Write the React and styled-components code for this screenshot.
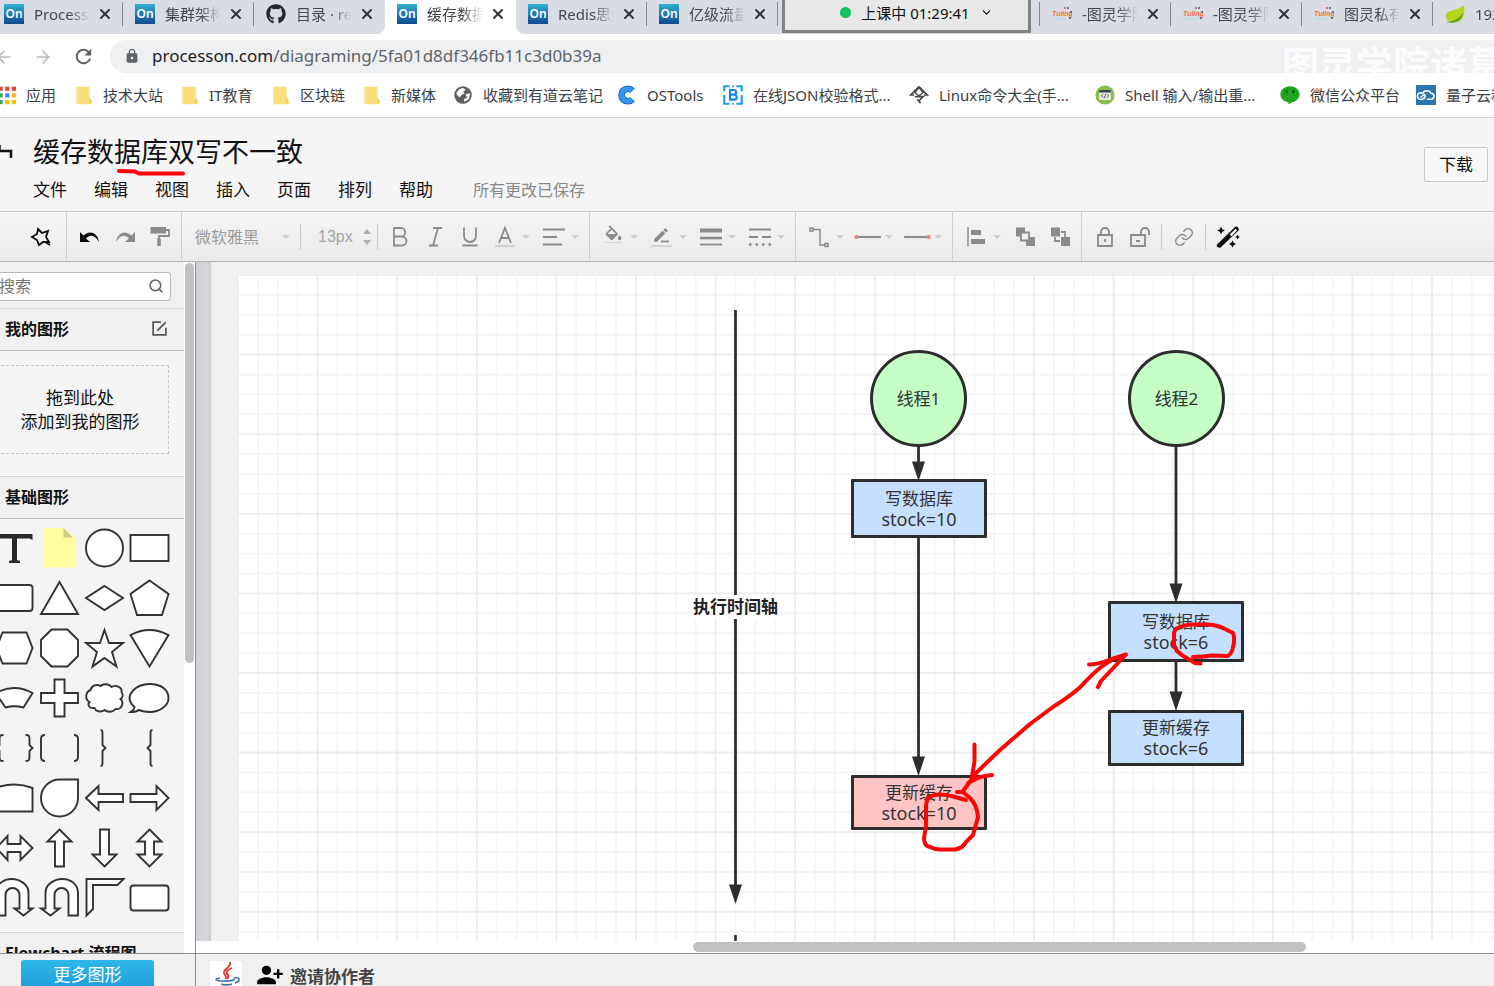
import React from "react";
import styled, { createGlobalStyle } from "styled-components";
import { FaGithub } from "react-icons/fa";
import { MdPersonAddAlt1, MdEdit, MdFormatColorFill, MdLock, MdRefresh } from "react-icons/md";
import { ArrowLeft, ArrowRight, ChevronDown, Link, Search, SquarePen, X } from "lucide-react";

const Global = createGlobalStyle`
  * { box-sizing: border-box; }
  body {
    margin: 0;
    overflow: hidden;
    background: #f0f0f0;
    color: #111;
    font-family: "Noto Sans", "Noto Sans CJK SC", sans-serif;
    font-size: 15px;
  }
  button, input, select { font: inherit; color: inherit; margin: 0; padding: 0; }
  button { background: none; border: 0; }
  a { color: inherit; text-decoration: none; }
  svg { display: block; flex: none; }
`;

const Page = styled.div`
  display: flex;
  flex-direction: column;
  height: 100vh;
  overflow: hidden;
`;

/* ---------- browser chrome ---------- */

const TabStrip = styled.div`
  position: relative;
  display: flex;
  flex: none;
  height: 34px;
  padding-right: 8px;
  background: #d9dce3;
`;

const TabList = styled.div`
  display: flex;
  margin-left: -8px;
`;

const Tab = styled.div`
  display: flex;
  flex: none;
  align-items: center;
  width: 131px;
  height: 34px;
  padding: 0 11px 6px 12px;
  background: ${(p) => (p.$active ? "#fff" : "#d9dce3")};
  border-radius: ${(p) => (p.$before ? "0 0 8px 0" : p.$after ? "0 0 0 8px" : "0")};
  box-shadow: ${(p) => (p.$before ? "8px 8px 0 #fff" : p.$after ? "-8px 8px 0 #fff" : "none")};
  position: relative;
  z-index: ${(p) => (p.$active ? 1 : 0)};
`;

const TabRule = styled.span`
  flex: none;
  width: 1px;
  height: 24px;
  margin: 0 12px 0 -13px;
  background: ${(p) => (p.$on ? "#85878d" : "transparent")};
`;

const TabTitle = styled.a`
  flex: none;
  width: 56px;
  margin: 0 7px 0 10px;
  overflow: hidden;
  white-space: nowrap;
  line-height: 24px;
  color: #45484d;
  mask-image: linear-gradient(90deg, #000 62%, transparent 100%);
`;

const CloseButton = styled.button`
  color: #33363b;
`;

const OnBadge = styled.span`
  flex: none;
  width: 20px;
  height: 20px;
  background: linear-gradient(#2fb0cf, #1c6fae 60%, #124a8f);
  color: #fff;
  font-size: 12px;
  font-weight: 600;
  line-height: 19px;
  text-align: center;
`;

const ClassStatus = styled.button`
  position: absolute;
  top: 0;
  left: 782px;
  z-index: 2;
  display: flex;
  align-items: center;
  justify-content: center;
  gap: 10px;
  width: 249px;
  height: 33px;
  padding: 0 0 6px 20px;
  background: #e8e8e8;
  border: 3px solid #808286;
  border-top: 0;
  color: #111;
  white-space: nowrap;
`;

const LiveDot = styled.span`
  width: 11px;
  height: 11px;
  border-radius: 50%;
  background: #12c25b;
`;

const NavRow = styled.div`
  display: flex;
  flex: none;
  align-items: center;
  height: 39px;
  padding-top: 6px;
  background: #fff;
`;

const NavButtons = styled.div`
  display: flex;
  flex: none;
  gap: 19px;
  width: 116px;
  margin-left: -6px;
  color: #b9bbbe;
  button:last-child { color: #5b5e63; }
`;

const AddressBar = styled.div`
  position: relative;
  display: flex;
  flex: 1;
  align-items: center;
  gap: 12px;
  height: 33px;
  padding: 0 0 2px 14px;
  overflow: hidden;
  border-radius: 17px 0 0 17px;
  background: #eff0f2;
  color: #5f6368;
  font-size: 17px;
  line-height: 30px;
`;

const Host = styled.span`
  color: #202124;
`;

const Watermark = styled.span`
  position: absolute;
  top: 3px;
  right: -10px;
  color: #fbfcfd;
  font-size: 37px;
  font-weight: 700;
  line-height: 44px;
  white-space: nowrap;
`;

const Bookmarks = styled.nav`
  display: flex;
  flex: none;
  height: 45px;
  padding-bottom: 1px;
  background: #fff;
  border-bottom: 1px solid #d2d4d7;
  overflow: hidden;
  > :first-child { margin-left: -4px; }
`;

const Bookmark = styled.a`
  display: flex;
  flex: 0 0 ${(p) => p.$w}px;
  align-items: center;
  gap: 10px;
  color: #3c4043;
  white-space: nowrap;
`;

/* ---------- editor header ---------- */

const Header = styled.header`
  display: flex;
  flex: none;
  justify-content: space-between;
  height: 93px;
  background: #f5f5f5;
`;

const HeaderLeft = styled.div`
  display: flex;
  gap: 20px;
`;

const BackButton = styled.button`
  align-self: flex-start;
  width: 13px;
  padding-top: 24px;
`;

const Title = styled.h1`
  position: relative;
  margin: 14px 0 0;
  font-size: 27px;
  font-weight: 400;
  line-height: 40px;
`;

const TitleInk = styled.svg`
  position: absolute;
  left: 82px;
  top: 35px;
`;

const MenuBar = styled.nav`
  display: flex;
  align-items: center;
  gap: 27px;
  margin-top: 4px;
  font-size: 17px;
  line-height: 28px;
`;

const SaveNote = styled.span`
  margin-left: 13px;
  color: #888;
  font-size: 16px;
`;

const DownloadButton = styled.button`
  width: 64px;
  height: 35px;
  margin: 29px 6px 0 0;
  border: 1px solid #c9c9c9;
  border-radius: 2px;
  background: #f7f7f7;
  font-size: 17px;
  line-height: 32px;
`;

/* ---------- toolbar ---------- */

const Toolbar = styled.div`
  display: flex;
  flex: none;
  height: 51px;
  border-top: 1px solid #c6c6c6;
  border-bottom: 1px solid #b3b3b3;
  background: linear-gradient(#f5f5f5, #eaeaea);
  box-shadow: inset 0 1px 0 #fff;
  color: #8b8b8b;
`;

const ToolGroup = styled.div`
  display: flex;
  flex: none;
  align-items: center;
  padding: 0 ${(p) => p.$end || 4}px 0 ${(p) => p.$start || 5}px;
  border-right: ${(p) => (p.$last ? "0" : "1px solid #cfcfcf")};
`;

const ToolButton = styled.button`
  display: flex;
  align-items: center;
  justify-content: center;
  width: 35px;
  height: 34px;
  color: ${(p) => (p.$dark ? "#0a0a0a" : "inherit")};
`;

const Caret = styled.span`
  width: 8px;
  margin-right: 6px;
  border: 4px solid transparent;
  border-top: 4px solid #cfcfcf;
  border-bottom: 0;
`;

const ToolRule = styled.span`
  width: 1px;
  height: 26px;
  margin: 0 4px;
  background: #c9c9c9;
`;

const FontPicker = styled.label`
  display: flex;
  align-items: center;
  width: 109px;
  padding-left: 8px;
  color: #9b9b9b;
  select {
    appearance: none;
    flex: 1;
    min-width: 0;
    border: 0;
    background: none;
    font-size: 16px;
  }
`;

const SizePicker = styled.label`
  display: flex;
  align-items: center;
  width: 68px;
  padding-left: 13px;
  color: #a5a5a5;
  input {
    width: 43px;
    border: 0;
    background: none;
    font-family: "Liberation Sans", sans-serif;
    font-size: 16px;
  }
`;

/* ---------- workspace ---------- */

const Workspace = styled.div`
  display: flex;
  flex: 1;
  min-height: 0;
`;

const Sidebar = styled.aside`
  display: flex;
  flex: none;
  width: 196px;
  overflow: hidden;
  border-right: 1px solid #8c8c8c;
  background: #fff;
`;

const ShapeLibrary = styled.div`
  width: 184px;
  overflow: hidden;
  background: #f4f4f4;
`;

const ScrollTrack = styled.div`
  width: 11px;
  padding: 1px 1px 0;
`;

const ScrollThumb = styled.div`
  width: 9px;
  height: 58%;
  border-radius: 5px;
  background: #c1c1c1;
`;

const SearchArea = styled.div`
  height: 46px;
  padding: 10px 13px 0 0;
  background: #f0f0f0;
`;

const SearchBox = styled.label`
  display: flex;
  align-items: center;
  height: 29px;
  margin-left: -10px;
  padding: 0 6px 1px 8px;
  border: 1px solid #b9b9b9;
  border-radius: 3px;
  background: #fff;
  color: #666;
  input {
    flex: 1;
    min-width: 0;
    border: 0;
    background: none;
    font-size: 16px;
  }
  input::placeholder { color: #777; opacity: 1; }
`;

const SectionTitle = styled.h2`
  display: flex;
  align-items: center;
  justify-content: space-between;
  height: 43px;
  margin: 0;
  padding: 0 16px 3px 5px;
  border-top: 1px solid #d6d6d6;
  border-bottom: 1px solid #bfbfbf;
  background: #f0f0f0;
  font-size: 16px;
  font-weight: 700;
  white-space: nowrap;
`;

const DropZone = styled.div`
  display: flex;
  align-items: center;
  justify-content: center;
  height: 89px;
  margin: 14px 15px 22px -9px;
  border: 1px dashed #c6c6c6;
  font-size: 17px;
  line-height: 24px;
  text-align: center;
`;

const ShapeGrid = styled.div`
  display: grid;
  grid-template-columns: repeat(4, 45px);
  grid-auto-rows: 50px;
  margin: 0 0 0 -8px;
  padding: 4px 0 9px;
`;

const Ruler = styled.div`
  flex: none;
  width: 15px;
  background: linear-gradient(90deg, #cfd1d7, #d5d7dc 70%, #c9cbd0);
`;

const CanvasColumn = styled.div`
  display: flex;
  flex: 1;
  flex-direction: column;
  min-width: 0;
`;

const CanvasView = styled.div`
  display: flex;
  flex: 1;
  min-height: 0;
  overflow: hidden;
  background: #f0f0f0;
`;

const Sheet = styled.div`
  position: relative;
  flex: 1;
  margin: 13px 0 0 27px;
  overflow: hidden;
  background: #fff;
`;

const Layer = styled.svg`
  position: absolute;
  top: 0;
  left: 0;
`;

const nodeFill = { green: "#c5ffc5", blue: "#c5e0ff", pink: "#ffc5c5" };

const Node = styled.div`
  position: absolute;
  left: ${(p) => p.$x}px;
  top: ${(p) => p.$y}px;
  width: ${(p) => p.$w}px;
  height: ${(p) => p.$h}px;
  display: flex;
  flex-direction: column;
  align-items: center;
  justify-content: center;
  border: 3px solid #2d2d2d;
  border-radius: ${(p) => (p.$round ? "50%" : "1px")};
  background: ${(p) => nodeFill[p.$tone]};
  color: #333;
  font-size: 17px;
  line-height: 21px;
  white-space: nowrap;
`;

const NodeValue = styled.span`
  font-size: 18px;
`;

const AxisLabel = styled.div`
  position: absolute;
  left: 455px;
  top: 320px;
  background: #fff;
  color: #222;
  font-size: 17px;
  font-weight: 700;
  line-height: 24px;
`;

const HScroll = styled.div`
  flex: none;
  height: 12px;
  padding: 1px 188px 0 497px;
  background: #fff;
`;

const HThumb = styled.div`
  height: 10px;
  border-radius: 5px;
  background: #c1c1c1;
`;

const Footer = styled.footer`
  display: flex;
  flex: none;
  height: 33px;
  overflow: hidden;
  border-top: 1px solid #8c8c8c;
  background: #f0f0f0;
`;

const FooterSide = styled.div`
  flex: none;
  width: 196px;
  padding: 6px 0 0 21px;
  border-right: 1px solid #8c8c8c;
`;

const MoreShapes = styled.button`
  width: 133px;
  height: 34px;
  border-radius: 3px;
  background: linear-gradient(#2fb8e9, #1c97d6);
  color: #fff;
  font-size: 17px;
  line-height: 28px;
  padding-bottom: 5px;
`;

const FooterMain = styled.div`
  display: flex;
  align-items: flex-start;
  gap: 14px;
  padding: 7px 0 0 14px;
`;

const Avatar = styled.span`
  width: 32px;
  height: 32px;
  border-radius: 2px;
  background: #fff;
`;

const InviteButton = styled.button`
  display: flex;
  align-items: center;
  gap: 6px;
  height: 28px;
  color: #444;
  font-size: 17px;
  font-weight: 700;
  svg { color: #000; }
`;

/* ---------- drawings ---------- */

const Glyph = ({ size = 24, children, ...rest }) => (
  <svg width={size} height={size} viewBox="-12 -12 24 24" fill="none" stroke="currentColor" strokeWidth="1.8" {...rest}>
    {children}
  </svg>
);

const Folder = () => (
  <Glyph size={20} stroke="none">
    <path d="M-7 -10h14a1 1 0 0 1 1 1v13l3 3v3l-2 1H-7a1 1 0 0 1-1-1V-9a1 1 0 0 1 1-1z" fill="#fbdf7c" />
    <path d="M8 4l2 2v4H7V6z" fill="#f6cf5f" />
  </Glyph>
);

const AppsIcon = () => {
  const colors = ["#ea4335", "#ea4335", "#ea4335", "#34a853", "#4285f4", "#fbbc05", "#34a853", "#fbbc05", "#fbbc05"];
  return (
    <Glyph size={20} stroke="none">
      {colors.map((c, i) => (
        <rect key={i} x={-9 + (i % 3) * 8} y={-10 + Math.floor(i / 3) * 8} width="5" height="5" fill={c} />
      ))}
    </Glyph>
  );
};

const GlobeIcon = () => (
  <Glyph size={20} stroke="none">
    <circle r="10.5" fill="#5b5e63" />
    <path d="M-8 -1C-7-6-3-9 1-8L3-6 0-4 2-2-2 0-4 3zM3-1l5-1C9 3 6 7 2 8L1 5 5 3z" fill="#fff" />
  </Glyph>
);

const CIcon = () => (
  <Glyph size={20}>
    <path d="M6.500 -5A7.500 7.500 0 1 0 6.500 5" stroke="#1668c4" strokeWidth="8" />
    <path d="M6.500 -5A7.500 7.500 0 1 0 6.500 5" stroke="#3596f5" strokeWidth="6" />
  </Glyph>
);

const BIcon = () => (
  <Glyph size={20}>
    <path d="M-4 -10.500h-6.500v6M-10.500 0v10.500h6.500M4 -10.500h6.500v6M10.500 0v10.500h-6.500M-1 -10.500h2M-1 10.500h2" stroke="#22a0ea" strokeWidth="2.600" />
    <path d="M-3.500 -6H1a2.800 2.800 0 0 1 0 5.600H-3.500zM-3.500 -.4H1.500a3 3 0 0 1 0 6H-3.500z" stroke="#1b87e5" strokeWidth="2.600" />
  </Glyph>
);

const LingIcon = () => (
  <Glyph size={20} stroke="#4a4a4a">
    <path d="M0 -10L-10 0h4M0 -10L10 0h-4M-5 2h10L0 7M-2 5l4 5" strokeWidth="2" />
    <path d="M0 -9L5 -3 0 1-5 -3z" />
  </Glyph>
);

const ShellIcon = () => (
  <Glyph size={20} stroke="none">
    <circle r="11.500" fill="#86bf4b" />
    <rect x="-7" y="-6" width="14" height="12" rx="1" fill="#e8f0df" />
    <path d="M-7 -6h14v3H-7z" fill="#35444d" />
    <path d="M-2 -1l-2.500 2L-2 3M2 -1l2.500 2L2 3M1 -1.500L-1 4" stroke="#35444d" strokeWidth="1" fill="none" />
  </Glyph>
);

const WechatIcon = () => (
  <Glyph size={20} stroke="none">
    <path d="M0 -10.500C7-10.500 11.500-6 11.500-1S7 8 3 8.500l-5 3-0-3C-8 8-11.500 4-11.500-1-11.500-6-7-10.500 0-10.500z" fill="#1fa61c" />
    <ellipse cx="-4" cy="-4" rx="1.700" ry="2" fill="#0b5c0a" />
    <ellipse cx="4" cy="-4" rx="1.700" ry="2" fill="#0b5c0a" />
  </Glyph>
);

const CloudIcon = () => (
  <Glyph size={20}>
    <rect x="-12" y="-12" width="24" height="24" fill="#2a74b0" stroke="none" />
    <path d="M-5 5a4 4 0 1 1 1-7 5.500 5.500 0 0 1 10 0 3.500 3.500 0 0 1 0 7H1M-7 3l6-4M-5 5c3 0 4-2 4-5" stroke="#fff" />
  </Glyph>
);

const LeafIcon = () => (
  <Glyph size={20} stroke="none">
    <path d="M11 -11C12 0 10 9 1 10-6 11-11 8-11 2-11-5 3-3 11-11z" fill="#b5d31b" />
    <path d="M-11 10C-3 9 6 6 10 -2 9 6 4 10-3 10.500z" fill="#5da012" />
  </Glyph>
);

const TuringIcon = () => (
  <svg width="20" height="20" viewBox="0 0 20 20">
    <text x="0" y="12" fontSize="7" fontWeight="700" fontStyle="italic" fontFamily="Liberation Sans" fill="#f0743a">Tuling</text>
    <path d="M2 15h12" stroke="#b9dde6" strokeWidth="1.500" />
    <g fill="#4b4f9e"><circle cx="16" cy="4" r="1" /><circle cx="19" cy="8" r="1" /><circle cx="18" cy="14" r="1" /></g>
    <circle cx="13" cy="4" r="1" fill="#e34c68" />
  </svg>
);

const JavaIcon = () => (
  <svg width="32" height="32" viewBox="0 0 32 32" fill="none">
    <path d="M20 1C22 6 13 8 14 12c1 3 3 3 2 6M22 7c-5 2-7 4-4 7 1 2 0 3-1 4" stroke="#e2362f" strokeWidth="1.800" />
    <path d="M10 17c-7 1-4 3 4 3s12-1 9-2M24 17c6-2 7 3 1 5M11 23c3 1 8 1 11 0M7 26c-5 2 3 4 10 4s12-2 9-3" stroke="#3b74b4" strokeWidth="1.600" />
  </svg>
);

const Redo = ({ flip }) => (
  <Glyph stroke="none">
    <path transform={flip ? "scale(-1 1)" : undefined} fill="currentColor" d="M10 -5v10H0l4-3.500C0-3-5-2-9 5-8-3-1-8 6.500-1.500z" />
  </Glyph>
);

const outline = { stroke: "#333", strokeWidth: 1.9, fill: "#fff" };
const shapes = [
  ["文本", <path d="M-18 -14H18v6l-3-1.500H2.500V12l3 1v2H-5.500v-2l3-1V-9.500H-15L-18 -8z" fill="#2b2b2b" stroke="none" />],
  ["便签", <g stroke="none"><path d="M-16 -20H4L16 -10V19.500H-16z" fill="#ffffa0" /><path d="M4 -20L13.500 -10.500H4z" fill="#cdcd80" /></g>],
  ["圆形", <circle r="18.500" />],
  ["矩形", <rect x="-19" y="-13" width="38" height="26" />],
  ["圆角矩形", <rect x="-19" y="-13" width="37" height="26" rx="3" />],
  ["三角形", <path d="M0 -16L18.500 16H-18.500z" />],
  ["菱形", <path d="M0 -12L18.500 0 0 12-18.500 0z" />],
  ["五边形", <path d="M0 -17.500L19-4 12.500 17H-12.500L-19-4z" />],
  ["六边形", <path d="M-18 0L-12-15.500H12L18 0 12 15.500H-12z" />],
  ["八边形", <path d="M-8-18.500H8L18.500-8V8L8 18.500H-8L-18.500 8V-8z" />],
  ["星形", <path d="M0-18L4.500-5H18.500L7.500 4 12 18.500 0 10-12 18.500-7.500 4-18.500-5H-4.500z" />],
  ["扇形", <path d="M-19-13Q0-23 19-13L0 18.500z" />],
  ["弧带", <path d="M-19-5Q0-15 18-5L9 9.500Q0 7-9 9.500z" />],
  ["十字", <path d="M-5-18.500H5V-5H18.500V5H5V18.500H-5V5H-18.500V-5H-5z" />],
  ["云", <path d="M-14-8C-13-13-7-14-4-12-1-15 5-14 7-11 12-14 18-10 17-6 19-3 18 0 16 1 20 5 17 12 11 11 8 15 2 14 0 12-4 15-9 13-10 10-16 11-17 6-15 4-20 1-19-6-14-8z" />],
  ["对话", <path d="M-15 9C-28-3-12-14 0-14S19-8 19 0 10 14 0 14C-5 14-8 13-11 12-13 14-16 14-19 14-16 12-15 11-15 9z" />],
  ["大括号", <path fill="none" d="M-11-13c-4 0-4 1-4 5v5l-3 3 3 3v5c0 4 0 5 4 5M11-13c4 0 4 1 4 5v5l3 3-3 3v5c0 4 0 5-4 5" />],
  ["中括号", <path fill="none" d="M-14.500-13Q-18.500-13-18.500-9V9Q-18.500 13-14.500 13M14.500-13Q18.500-13 18.500-9V9Q18.500 13 14.500 13" />],
  ["右括号", <path fill="none" d="M-4-18c2 0 2 1 2 5V-3L1 0-2 3V13c0 4 0 5-2 5" />],
  ["左括号", <path fill="none" d="M3-18c-2 0-2 1-2 5V-3L-2 0 1 3V13c0 4 0 5 2 5" />],
  ["曲边矩形", <path d="M-19-10Q0-17 18-10V13.500H-19z" />],
  ["水滴", <path d="M0-18.500H18.500V0A18.500 18.500 0 1 1 0-18.500z" />],
  ["左箭头", <path d="M-18.500 0L-6-12V-4H18.500V4H-6V12z" />],
  ["右箭头", <path d="M19 0L7-12V-4H-19V4H7V12z" />],
  ["左右箭头", <path d="M-18 0L-7-12V-4H6V-12L18 0 6 12V4H-7V12z" />],
  ["上箭头", <path d="M0-18.500L12-6.500H4.500V18.500H-4.500V-6.500H-12z" />],
  ["下箭头", <path d="M0 18.500L12 6.500H4.500V-18.500H-4.500V6.500H-12z" />],
  ["上下箭头", <path d="M0-18.500L12-6.500H4.500V6.500H12L0 18.500-12 6.500H-4.500V-6.500H-12z" />],
  ["右转", <path d="M-18 17.500V-5C-18-14-11-19-3-19S14-14 14-5V10.500H18L9 17.500 0 10.500H5V-3C5-7 2-10-2-10S-9-7-9-3V17.500z" />],
  ["左转", <path d="M18.500 17.500V-5C18.500-14 11-19 3-19S-14-14-14-5V10.500H-18.500L-9 17.500 0 10.500H-5V-3C-5-7-2-10 2-10S9-7 9-3V17.500z" />],
  ["折角", <path d="M-18-19H19L13-13H-11.500V11L-18 17.500z" />],
  ["圆角框", <rect x="-19" y="-12.500" width="38" height="25" rx="3" />],
];

const tabs = [
  { icon: "on", title: "ProcessOn" },
  { icon: "on", title: "集群架构", rule: true },
  { icon: "github", title: "目录 · re", rule: true, before: true },
  { icon: "on", title: "缓存数据", active: true },
  { icon: "on", title: "Redis思维", after: true },
  { icon: "on", title: "亿级流量", rule: true },
  { rule: true },
  {},
  { icon: "turing", title: "-图灵学院", rule: true },
  { icon: "turing", title: "-图灵学院", rule: true },
  { icon: "turing", title: "图灵私有", rule: true },
  { icon: "leaf", title: "192.168", rule: true },
];

const tabIcons = {
  on: <OnBadge>On</OnBadge>,
  github: <FaGithub size={20} color="#24292e" />,
  turing: <TuringIcon />,
  leaf: <LeafIcon />,
};

const bookmarks = [
  [77, <AppsIcon />, "应用"],
  [106, <Folder />, "技术大站"],
  [91, <Folder />, "IT教育"],
  [91, <Folder />, "区块链"],
  [92, <Folder />, "新媒体"],
  [164, <GlobeIcon />, "收藏到有道云笔记"],
  [106, <CIcon />, "OSTools"],
  [186, <BIcon />, "在线JSON校验格式..."],
  [186, <LingIcon />, "Linux命令大全(手..."],
  [185, <ShellIcon />, "Shell 输入/输出重..."],
  [136, <WechatIcon />, "微信公众平台"],
  [120, <CloudIcon />, "量子云科技"],
];

const menus = ["文件", "编辑", "视图", "插入", "页面", "排列", "帮助"];

const Drop = ({ label, children }) => (
  <>
    <ToolButton aria-label={label}>{children}</ToolButton>
    <Caret />
  </>
);

const EditorToolbar = () => (
  <Toolbar>
    <ToolGroup $start={23} $end={8}>
      <ToolButton $dark aria-label="收藏">
        <Glyph strokeWidth="1.800"><path d="M-3 -8L1 -4 7 -6 5 0 8 5 2 5-2 8-4 3-9 0-4 -3zM4 5l5 3" /></Glyph>
      </ToolButton>
    </ToolGroup>
    <ToolGroup>
      <ToolButton $dark aria-label="撤销"><Redo flip /></ToolButton>
      <ToolButton aria-label="恢复"><Redo /></ToolButton>
      <ToolButton aria-label="格式刷">
        <Glyph><path d="M-9.500 -10H6v6.500H-9.500z" fill="currentColor" stroke="none" /><path d="M6 -7h3v6h-10v3" /><path d="M-1 1.500V9" strokeWidth="3.500" /></Glyph>
      </ToolButton>
    </ToolGroup>
    <ToolGroup>
      <FontPicker>
        <select aria-label="字体"><option>微软雅黑</option></select>
        <Caret />
      </FontPicker>
      <ToolRule />
      <SizePicker>
        <input aria-label="字号" defaultValue="13px" />
        <Glyph size={12} stroke="none" overflow="visible"><path d="M0 -16L8 -6H-8zM0 16L8 6H-8z" fill="#b0b0b0" /></Glyph>
      </SizePicker>
      <ToolRule />
      <ToolButton aria-label="粗体"><Glyph><path d="M-6 -9H1a4 4 0 0 1 0 8.500H-6zM-6 -.5H2a4.500 4.500 0 0 1 0 9H-6z" /></Glyph></ToolButton>
      <ToolButton aria-label="斜体"><Glyph><path d="M-2 -9H7M-6 8.500H3M3 -9L-2 8.500" /></Glyph></ToolButton>
      <ToolButton aria-label="下划线"><Glyph><path d="M-6 -9.500V-1a6 6 0 0 0 12 0V-9.500M-7.500 8.500H7.500" /></Glyph></ToolButton>
      <Drop label="文字颜色"><Glyph><path d="M-6 6L0 -9 6 6M-4 1H4" /><path d="M-10 9H10" stroke="#ccc" /></Glyph></Drop>
      <Drop label="对齐"><Glyph><path d="M-11 -7.500H11M-11 0H3M-11 7.500H8" /></Glyph></Drop>
    </ToolGroup>
    <ToolGroup>
      <Drop label="填充"><Glyph stroke="none"><g transform="translate(-10 -12)"><svg width="21" height="18" viewBox="0 0 24 20"><MdFormatColorFill size={24} /></svg></g></Glyph></Drop>
      <Drop label="线条颜色"><Glyph stroke="none"><g transform="translate(-10 -11)"><MdEdit size={18} /></g><path d="M-1 4.500H7" stroke="currentColor" /><path d="M-11 9H10" stroke="#ccc" strokeWidth="1.600" /></Glyph></Drop>
      <Drop label="线条宽度"><Glyph><path d="M-11 -6.500H11" strokeWidth="4" /><path d="M-11 1H11" strokeWidth="2.600" /><path d="M-11 7.500H11" /></Glyph></Drop>
      <Drop label="线条样式"><Glyph><path d="M-11 -7.500H11M-11 0H-2M2 0H11" /><path d="M-11 7.500H11" strokeWidth="2.500" strokeDasharray="2.500 4" /></Glyph></Drop>
    </ToolGroup>
    <ToolGroup>
      <Drop label="连线类型"><Glyph strokeWidth="1.500"><path d="M-6 -7.500H1V8H6M-9 -9h3v3h-3zM6 6.500h3v3H6z" /></Glyph></Drop>
      <Drop label="起点"><Glyph size={28}><path d="M-10 0H11" /><circle cx="-10" r="1.800" fill="#f08080" stroke="none" /></Glyph></Drop>
      <Drop label="终点"><Glyph size={28}><path d="M-11 0H10" /><circle cx="10" r="1.800" fill="#f08080" stroke="none" /></Glyph></Drop>
    </ToolGroup>
    <ToolGroup>
      <Drop label="图形对齐"><Glyph><path d="M-8 -10V9.500" strokeWidth="1.500" /><path d="M-5 -7H5v5H-5zM-5 2H9v5H-5z" fill="currentColor" stroke="none" /></Glyph></Drop>
      <ToolButton aria-label="置于顶层"><Glyph><path d="M-9 -9.500h9v9h-9zM1 0h9v9h-9z" fill="currentColor" stroke="none" /><path d="M-4 -4.500h8v8h-8z" fill="#f0f0f0" /></Glyph></ToolButton>
      <ToolButton aria-label="置于底层"><Glyph><path d="M-9 -9.500h9v9h-9zM1 0h9v9h-9z" fill="currentColor" stroke="none" /><path d="M1 -5H5V0M-5 0V4H0" /></Glyph></ToolButton>
    </ToolGroup>
    <ToolGroup $last>
      <ToolButton aria-label="锁定"><Glyph><path d="M-7 -2H7V9H-7zM-4 -2V-5a4 4 0 0 1 8 0V-2M0 2V5" /></Glyph></ToolButton>
      <ToolButton aria-label="解锁"><Glyph><path d="M-9 -2H5V9H-9zM1 -2V-5a4 4 0 0 1 8 0V-2M-4 4H0" /></Glyph></ToolButton>
      <ToolRule />
      <ToolButton aria-label="链接"><Link size={20} strokeWidth={1.8} /></ToolButton>
      <ToolRule />
      <ToolButton $dark aria-label="美化">
        <Glyph stroke="none">
          <path fill="currentColor" fillRule="evenodd" d="M-11 7.500L7 -10Q8.500 -11 10-9.500T10.500-6.500L-7.500 10.500Q-9 11-10.500 10T-11 7.500zM1.500-2.500L3.500-.8 8.800-6.200Q9-8.300 7.300-8z" />
          <path fill="currentColor" d="M-7 -10.500l1.200 2.700L-3-6.500-5.800-5.200-7-2.500-8.200-5.200-11-6.500-8.200-7.800zM4.500 3.500l1.200 2.300L8 7 5.700 8.200 4.500 10.500 3.300 8.200 1 7 3.300 5.800zM9.500-2.500l.8 1.700L12 0 10.300.8 9.500 2.500 8.700.8 7 0 8.700-.8z" />
        </Glyph>
      </ToolButton>
    </ToolGroup>
  </Toolbar>
);

const ArrowDown = ({ x, from, to }) => (
  <g>
    <path d={`M${x} ${from}V${to - 17}`} stroke="#2d2d2d" strokeWidth="2.800" />
    <path d={`M${x - 6.5} ${to - 18.5}h13L${x} ${to + 1}z`} fill="#2d2d2d" />
  </g>
);

const Diagram = () => (
  <Sheet>
    <Layer width="100%" height="100%">
      <defs>
        <pattern id="grid" width="79.600" height="79.600" patternUnits="userSpaceOnUse">
          <path d="M19.900 0V79.600M39.800 0V79.600M59.700 0V79.600M0 19.900H79.600M0 39.800H79.600M0 59.700H79.600" stroke="#f2f2f2" strokeWidth="1.400" />
          <path d="M0 0H79.600M0 0V79.600M79.600 0V79.600M0 79.600H79.600" stroke="#e8e8e8" strokeWidth="1.500" />
        </pattern>
      </defs>
      <rect width="100%" height="100%" fill="url(#grid)" />
      <g transform="translate(-238 -275)">
        <ArrowDown x={735.5} from={310} to={903} />
        <path d="M735.500 935V945" stroke="#2d2d2d" strokeWidth="2.600" />
        <ArrowDown x={918.5} from={444} to={480} />
        <ArrowDown x={918.5} from={536} to={775} />
        <ArrowDown x={1176} from={444} to={602} />
        <ArrowDown x={1176} from={660} to={710} />
      </g>
    </Layer>
    <AxisLabel>执行时间轴</AxisLabel>
    <Node $tone="green" $round $x={632} $y={75} $w={97} $h={97}>线程1</Node>
    <Node $tone="green" $round $x={890} $y={75} $w={97} $h={97}>线程2</Node>
    <Node $tone="blue" $x={613} $y={204} $w={136} $h={59}><span>写数据库</span><NodeValue>stock=10</NodeValue></Node>
    <Node $tone="blue" $x={870} $y={326} $w={136} $h={61}><span>写数据库</span><NodeValue>stock=6</NodeValue></Node>
    <Node $tone="blue" $x={870} $y={435} $w={136} $h={56}><span>更新缓存</span><NodeValue>stock=6</NodeValue></Node>
    <Node $tone="pink" $x={613} $y={500} $w={136} $h={55}><span>更新缓存</span><NodeValue>stock=10</NodeValue></Node>
    <Layer width="100%" height="100%" fill="none" stroke="#fb0606" strokeWidth="4" strokeLinecap="round" strokeLinejoin="round">
      <g transform="translate(-238 -275)">
        <path d="M1200.500 663.500L1195 663 1190 660Q1182 656 1177 651L1174 645V635Q1174 629 1178 628 1184 625 1190 624.500H1209Q1220 626 1224 628.500L1233 633Q1235 638 1233.500 645 1232 655 1227 656L1212 655.500Q1202 657 1193 657" />
        <path d="M1126 654.500L1112 659Q1096 665 1089 664.500M1098 687L1101 681 1126 654.500M1112 660Q1100 666 1085 682 1078 691 1053 707L1030 724 1000 750 976 773 969 783 963 791M974.500 744.500V762L971 781M992 775L980 777 968 783M957 792L964 792" />
        <path d="M966 800L955 797Q942 793 933 795.500 927 796 926 806V826L924 838Q924 846 930 847 936 850 942 849.500H955Q963 848 966 842L973 835 978 817Q977 805 970 798L963 792" />
      </g>
    </Layer>
  </Sheet>
);

export default function App() {
  return (
    <Page>
      <Global />
      <TabStrip>
        <TabList>
          {tabs.map((t, i) => (
            <Tab key={i} $active={t.active} $before={t.before} $after={t.after}>
              <TabRule $on={t.rule} />
              {t.title && (
                <>
                  {tabIcons[t.icon]}
                  <TabTitle href="#">{t.title}</TabTitle>
                  <CloseButton aria-label="关闭"><X size={16} strokeWidth={3} /></CloseButton>
                </>
              )}
            </Tab>
          ))}
        </TabList>
        <ClassStatus>
          <LiveDot />
          <span>上课中 01:29:41</span>
          <ChevronDown size={13} />
        </ClassStatus>
      </TabStrip>
      <NavRow>
        <NavButtons>
          <button aria-label="后退"><ArrowLeft size={20} /></button>
          <button aria-label="前进"><ArrowRight size={20} /></button>
          <button aria-label="刷新"><MdRefresh size={23} /></button>
        </NavButtons>
        <AddressBar>
          <MdLock size={16} />
          <span><Host>processon.com</Host>/diagraming/5fa01d8df346fb11c3d0b39a</span>
          <Watermark>图灵学院诸葛</Watermark>
        </AddressBar>
      </NavRow>
      <Bookmarks>
        {bookmarks.map(([w, icon, label]) => (
          <Bookmark key={label} href="#" $w={w}>{icon}{label}</Bookmark>
        ))}
      </Bookmarks>
      <Header>
        <HeaderLeft>
          <BackButton aria-label="返回">
            <svg width="13" height="18" viewBox="0 0 13 18" fill="none" stroke="#111" strokeWidth="2.500"><path d="M0 9H11V16" /><path d="M0 3V8" strokeWidth="1.500" /></svg>
          </BackButton>
          <div>
            <Title>
              缓存数据库双写不一致
              <TitleInk width="72" height="10" fill="none" stroke="#fb0606" strokeWidth="4" strokeLinecap="round"><path d="M4 4L20 4.500 24 6.500H68" /></TitleInk>
            </Title>
            <MenuBar>
              {menus.map((m) => <button key={m}>{m}</button>)}
              <SaveNote>所有更改已保存</SaveNote>
            </MenuBar>
          </div>
        </HeaderLeft>
        <DownloadButton>下载</DownloadButton>
      </Header>
      <EditorToolbar />
      <Workspace>
        <Sidebar>
          <ShapeLibrary>
            <SearchArea>
              <SearchBox>
                <input aria-label="搜索" placeholder="搜索" />
                <Search size={16} strokeWidth={2.4} />
              </SearchBox>
            </SearchArea>
            <SectionTitle>
              我的图形
              <Glyph size={17} stroke="#555" strokeWidth="2.400"><path d="M2 -9H-9V9H9V-1M-3 3L9 -9" /></Glyph>
            </SectionTitle>
            <DropZone>拖到此处<br />添加到我的图形</DropZone>
            <SectionTitle>基础图形</SectionTitle>
            <ShapeGrid>
              {shapes.map(([name, drawing]) => (
                <button key={name} aria-label={name}>
                  <svg width="45" height="50" viewBox="-22.500 -25 45 50" {...outline}>{drawing}</svg>
                </button>
              ))}
            </ShapeGrid>
            <SectionTitle>Flowchart 流程图</SectionTitle>
          </ShapeLibrary>
          <ScrollTrack><ScrollThumb /></ScrollTrack>
        </Sidebar>
        <CanvasColumn>
          <CanvasView>
            <Ruler />
            <Diagram />
          </CanvasView>
          <HScroll><HThumb /></HScroll>
        </CanvasColumn>
      </Workspace>
      <Footer>
        <FooterSide><MoreShapes>更多图形</MoreShapes></FooterSide>
        <FooterMain>
          <Avatar><JavaIcon /></Avatar>
          <InviteButton><MdPersonAddAlt1 size={28} />邀请协作者</InviteButton>
        </FooterMain>
      </Footer>
    </Page>
  );
}
